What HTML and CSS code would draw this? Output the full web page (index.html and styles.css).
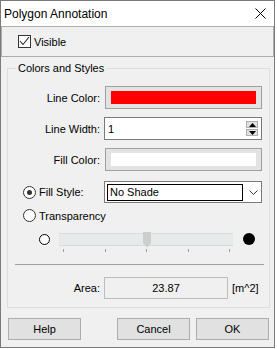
FILE: index.html
```html
<!DOCTYPE html>
<html lang="en">
<head>
  <meta charset="UTF-8">
  <meta name="viewport" content="width=device-width, initial-scale=1.0">
  <title>Polygon Annotation</title>
  <link rel="stylesheet" href="styles.css">
</head>
<body>
  <div class="window">
    <!-- Title bar -->
    <div class="titlebar">
      <span>Polygon Annotation</span>
      <svg class="close" width="11" height="11" viewBox="0 0 11 11">
        <path d="M0.5 0.5 L10.5 10.5 M10.5 0.5 L0.5 10.5" stroke="#000" stroke-width="1" fill="none"/>
      </svg>
    </div>

    <!-- Visible toggle -->
    <div class="visible-panel">
      <label class="check">
        <span class="checkbox">
          <svg width="11" height="11" viewBox="0 0 11 11">
            <path d="M1 5 L4 8.5 L10 1" stroke="#222" stroke-width="1.1" fill="none"/>
          </svg>
        </span>
        Visible
      </label>
    </div>

    <div class="content">
      <fieldset class="group">
        <legend>Colors and Styles</legend>

        <div class="row">
          <span class="label">Line Color:</span>
          <div class="swatch"><span class="swatch-fill red"></span></div>
        </div>

        <div class="row">
          <span class="label">Line Width:</span>
          <div class="spin-input">
            <span>1</span>
            <div class="spinner">
              <span class="spin-btn"><svg width="7" height="4" viewBox="0 0 7 4"><path d="M3.5 0 L7 4 L0 4 Z" fill="#000"/></svg></span>
              <span class="spin-btn"><svg width="7" height="4" viewBox="0 0 7 4"><path d="M0 0 L7 0 L3.5 4 Z" fill="#000"/></svg></span>
            </div>
          </div>
        </div>

        <div class="row">
          <span class="label">Fill Color:</span>
          <div class="swatch"><span class="swatch-fill white"></span></div>
        </div>

        <div class="row row-style">
          <label class="option label-left">
            <span class="radio on"></span>
            Fill Style:
          </label>
          <div class="select">
            <span class="select-value">No Shade</span>
            <svg class="chevron" width="9" height="5" viewBox="0 0 9 5">
              <path d="M0.5 0.5 L4.5 4.5 L8.5 0.5" stroke="#333" stroke-width="1" fill="none"/>
            </svg>
          </div>
        </div>

        <div class="row row-transparency">
          <label class="option option-wide">
            <span class="radio"></span>
            Transparency
          </label>
        </div>

        <div class="slider-row">
          <span class="dot-empty"></span>
          <div class="track">
            <svg class="thumb" width="8" height="16" viewBox="0 0 8 16">
              <path d="M0 0 H8 V11 L4 15.5 L0 11 Z" fill="#cdcdcd"/>
            </svg>
          </div>
          <span class="dot-full"></span>
        </div>
        <div class="ticks">
          <span></span><span></span><span></span><span></span><span></span>
        </div>

        <div class="separator"></div>

        <div class="row row-area">
          <span class="label">Area:</span>
          <div class="area-box">23.87</div>
          <span class="unit">[m^2]</span>
        </div>
      </fieldset>

      <div class="buttons">
        <button class="button">Help</button>
        <div class="button-group">
          <button class="button">Cancel</button>
          <button class="button">OK</button>
        </div>
      </div>
    </div>
  </div>
</body>
</html>
```

FILE: styles.css
```css
* {
  box-sizing: border-box;
}

body {
  margin: 0;
  background: #fff;
  font-family: "Liberation Sans", Arial, sans-serif;
  font-size: 11px;
  color: #000;
}

.window {
  width: 275px;
  height: 348px;
  border: 1px solid #7a7a7a;
  background: #f0f0f0;
  display: flex;
  flex-direction: column;
}

.titlebar {
  height: 25px;
  flex-shrink: 0;
  background: #fff;
  display: flex;
  align-items: center;
  justify-content: space-between;
  padding: 0 8px 0 3px;
  font-size: 12px;
}

.visible-panel {
  height: 31px;
  flex-shrink: 0;
  border: 1px solid #adadad;
  display: flex;
  align-items: center;
  padding-left: 16px;
}

.check {
  display: flex;
  align-items: center;
  gap: 3px;
}

.checkbox {
  width: 13px;
  height: 13px;
  flex-shrink: 0;
  border: 1px solid #333;
  background: #fff;
  display: flex;
}

.content {
  flex: 1;
  display: flex;
  flex-direction: column;
  padding: 5px 4px 6px 6px;
}

.group {
  margin: 0;
  padding: 11px 0 8px 0;
  border: 1px solid #dcdcdc;
  min-width: 0;
}

.group legend {
  margin-left: 8px;
  padding: 0 2px;
  line-height: 13px;
}

.row {
  display: flex;
  align-items: center;
  gap: 4px;
  margin-top: 8px;
}

.row:first-of-type {
  margin-top: 0;
}

.row-style {
  margin-top: 10px;
}

.row-transparency {
  margin-top: 6px;
}

.row-area {
  margin-top: 12px;
}

.label {
  width: 92px;
  text-align: right;
}

.label-left {
  width: 92px;
  padding-left: 15px;
}

.option-wide {
  padding-left: 15px;
}

.swatch {
  width: 157px;
  height: 23px;
  margin-left: 1px;
  border: 1px solid #a0a0a0;
  background: #e3e3e3;
  padding: 4px 5px;
  display: flex;
}

.swatch-fill {
  flex: 1;
}

.red {
  background: #ff0000;
}

.white {
  background: #fff;
}

.spin-input {
  width: 158px;
  height: 23px;
  border: 1px solid #7a7a7a;
  background: #fff;
  display: flex;
  align-items: center;
  justify-content: space-between;
  padding: 0 3px 0 3px;
}

.spinner {
  display: flex;
  flex-direction: column;
  gap: 1px;
}

.spin-btn {
  width: 12px;
  height: 7px;
  border: 1px solid #b0b0b0;
  background: #e0e0e0;
  display: flex;
  align-items: center;
  justify-content: center;
}

.option {
  display: flex;
  align-items: center;
  gap: 3px;
}

.radio {
  width: 13px;
  height: 13px;
  flex-shrink: 0;
  border: 1px solid #333;
  border-radius: 50%;
  background: #fff;
  display: flex;
  align-items: center;
  justify-content: center;
}

.radio.on::after {
  content: "";
  width: 5px;
  height: 5px;
  border-radius: 50%;
  background: #333;
}

.select {
  width: 158px;
  height: 22px;
  border: 1px solid #7a7a7a;
  background: #fff;
  display: flex;
  align-items: center;
  padding: 1px 3px 1px 2px;
}

.select-value {
  width: 137px;
  height: 17px;
  border: 1px solid #000;
  display: flex;
  align-items: center;
  padding-left: 2px;
}

.chevron {
  margin-left: 6px;
}

.slider-row {
  display: flex;
  align-items: center;
  height: 16px;
  margin-top: 9px;
  padding-left: 31px;
}

.dot-empty {
  width: 11px;
  height: 11px;
  border: 1px solid #000;
  border-radius: 50%;
  background: #fff;
}

.dot-full {
  width: 12px;
  height: 12px;
  border-radius: 50%;
  background: #000;
  margin-left: 10px;
}

.track {
  position: relative;
  width: 174px;
  height: 13px;
  margin-left: 9px;
  background: #e7eaea;
  border-top: 1px solid #d9dcdc;
  border-bottom: 1px solid #d9dcdc;
}

.thumb {
  position: absolute;
  left: 84px;
  top: -2px;
}

.ticks {
  display: flex;
  justify-content: space-between;
  width: 167px;
  margin: 2px 0 0 55px;
}

.ticks span {
  width: 1px;
  height: 3px;
  background: #a0a0a0;
}

.separator {
  height: 1px;
  margin: 12px 5px 0 7px;
  background: #a0a0a0;
}

.area-box {
  width: 124px;
  height: 22px;
  border: 1px solid #bcbcbc;
  background: #f0f0f0;
  display: flex;
  align-items: center;
  justify-content: center;
}

.buttons {
  display: flex;
  justify-content: space-between;
  margin-top: 10px;
  padding: 0 1px;
}

.button-group {
  display: flex;
  gap: 6px;
}

.button {
  width: 73px;
  height: 22px;
  border: 1px solid #adadad;
  background: #e1e1e1;
  font-family: "Liberation Sans", Arial, sans-serif;
  font-size: 11px;
  color: #000;
  padding: 0;
}
```
